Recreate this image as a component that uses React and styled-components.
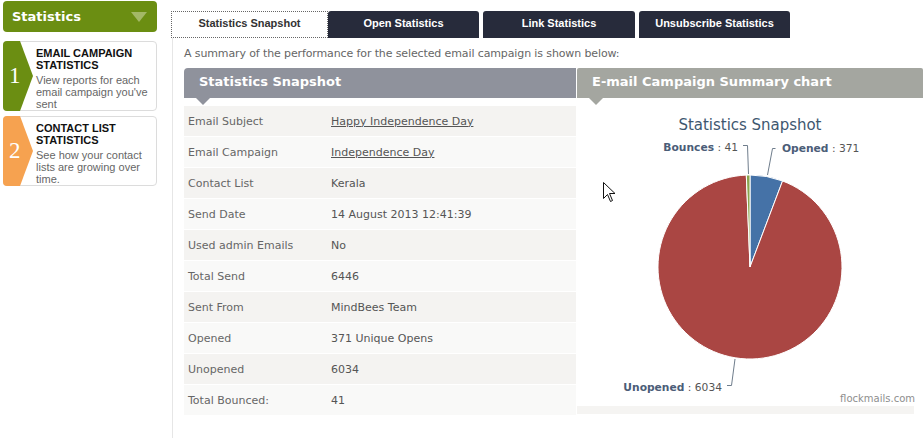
import React from 'react';
import styled, { createGlobalStyle } from 'styled-components';

const GlobalStyle = createGlobalStyle`
  body {
    margin: 0;
    background: #fff;
    overflow: hidden;
  }
`;

const steps = [
  {
    num: '1',
    color: '#6b8e12',
    title: 'Email Campaign Statistics',
    text: "View reports for each email campaign you've sent",
  },
  {
    num: '2',
    color: '#f6a250',
    title: 'Contact List Statistics',
    text: 'See how your contact lists are growing over time.',
  },
];

const tabs = [
  { label: 'Statistics Snapshot', width: 157, active: true, gap: 0 },
  { label: 'Open Statistics', width: 151, gap: 0 },
  { label: 'Link Statistics', width: 152, gap: 4 },
  { label: 'Unsubscribe Statistics', width: 151, gap: 4 },
];

const rows = [
  ['Email Subject', 'Happy Independence Day', true],
  ['Email Campaign', 'Independence Day', true],
  ['Contact List', 'Kerala'],
  ['Send Date', '14 August 2013 12:41:39'],
  ['Used admin Emails', 'No'],
  ['Total Send', '6446'],
  ['Sent From', 'MindBees Team'],
  ['Opened', '371 Unique Opens'],
  ['Unopened', '6034'],
  ['Total Bounced:', '41'],
];

const PieChart = () => (
  <svg width="341" height="307" viewBox="0 0 341 307">
    <text
      x="173"
      y="31"
      textAnchor="middle"
      fontFamily="DejaVu Sans, sans-serif"
      fontSize="15"
      fill="#3e576f"
      textLength="143"
    >
      Statistics Snapshot
    </text>

    <g stroke="#fff" strokeWidth="1" strokeLinejoin="round">
      <path d="M173 168 L173 76 A92 92 0 0 1 205.55 81.95 Z" fill="#4572a7" />
      <path d="M173 168 L205.55 81.95 A92 92 0 1 1 169.32 76.07 Z" fill="#aa4643" />
      <path d="M173 168 L169.32 76.07 A92 92 0 0 1 173 76 Z" fill="#89a54e" />
    </g>

    <g fill="none" stroke="#6f7d8c" strokeWidth="1">
      <path d="M166 46.5 L170.5 46.5 L171.5 75" />
      <path d="M198.5 49.5 L195.5 49.5 L190.5 76" />
      <path d="M158 260 L154.5 286.5 L150 286.5" />
    </g>

    <g fontFamily="DejaVu Sans, sans-serif" fontSize="10.7">
      <text x="161" y="52" textAnchor="end" fill="#555">
        <tspan fontWeight="bold" fill="#4b5d78">Bounces</tspan> : 41
      </text>
      <text x="205" y="53" fill="#555">
        <tspan fontWeight="bold" fill="#4b5d78">Opened</tspan> : 371
      </text>
      <text x="145" y="292" textAnchor="end" fill="#555">
        <tspan fontWeight="bold" fill="#4b5d78">Unopened</tspan> : 6034
      </text>
      <text x="338" y="303" textAnchor="end" fontSize="10" fill="#8e8e8e">
        flockmails.com
      </text>
    </g>

    <path
      d="M26.5 83.5 L26.5 99.5 L30.5 95.5 L33.5 102.5 L35.5 101.5 L32.5 94.5 L38 94.5 Z"
      fill="#fff"
      stroke="#111"
      strokeWidth="1"
      strokeLinejoin="round"
    />
  </svg>
);

const App = () => {
  return (
    <Page>
      <GlobalStyle />
      <Sidebar>
        <SideHeader>
          Statistics
          <Caret />
        </SideHeader>
        <StepList>
          {steps.map((s) => (
            <StepCard key={s.num}>
              <Badge color={s.color}>{s.num}</Badge>
              <StepText>
                <StepTitle>{s.title}</StepTitle>
                <StepDesc>{s.text}</StepDesc>
              </StepText>
            </StepCard>
          ))}
        </StepList>
      </Sidebar>

      <Main>
        <TabBar>
          {tabs.map((t) => (
            <Tab key={t.label} active={t.active} w={t.width} gap={t.gap}>
              {t.label}
            </Tab>
          ))}
        </TabBar>
        <Body>
          <Intro>A summary of the performance for the selected email campaign is shown below:</Intro>
          <Columns>
            <LeftCol>
              <PanelHeader bg="#8f929c" rounded>
                Statistics Snapshot
              </PanelHeader>
              <Table>
                {rows.map(([label, value, link], i) => (
                  <Row key={label} odd={i % 2 === 0}>
                    <Label>{label}</Label>
                    <Value link={link}>{value}</Value>
                  </Row>
                ))}
              </Table>
            </LeftCol>
            <RightCol>
              <PanelHeader bg="#a4a6a0">E-mail Campaign Summary chart</PanelHeader>
              <ChartPanel>
                <ChartCanvas>
                  <PieChart />
                </ChartCanvas>
              </ChartPanel>
            </RightCol>
          </Columns>
        </Body>
      </Main>
    </Page>
  );
};

export default App;

const Page = styled.div`
  display: flex;
  align-items: stretch;
  height: 438px;
  overflow: hidden;
`;

const Sidebar = styled.aside`
  width: 154px;
  margin: 1px 0 0 3px;
  flex-shrink: 0;
  display: flex;
  flex-direction: column;
`;

const SideHeader = styled.div`
  display: flex;
  align-items: center;
  justify-content: space-between;
  height: 31px;
  padding: 0 10px 0 9px;
  border-radius: 4px;
  background: #6b8e12;
  color: #fff;
  font-family: 'DejaVu Sans', sans-serif;
  font-weight: bold;
  font-size: 13px;
`;

const Caret = styled.span`
  width: 0;
  height: 0;
  border-left: 8px solid transparent;
  border-right: 8px solid transparent;
  border-top: 10px solid #a3b866;
`;

const StepList = styled.div`
  display: flex;
  flex-direction: column;
  gap: 5px;
  margin-top: 9px;
`;

const StepCard = styled.div`
  display: flex;
  height: 68px;
  border: 1px solid #dcdcdc;
  border-radius: 4px;
  background: #fff;
`;

const Badge = styled.div`
  width: 30px;
  margin: -1px 0 -1px -1px;
  flex-shrink: 0;
  display: flex;
  align-items: center;
  padding-left: 6px;
  box-sizing: border-box;
  background: ${(p) => p.color};
  border-radius: 4px 0 0 4px;
  clip-path: polygon(0 0, 17px 0, 30px 50%, 17px 100%, 0 100%);
  color: #fff;
  font-family: 'Liberation Serif', serif;
  font-size: 23px;
`;

const StepText = styled.div`
  padding: 5px 4px 0 3px;
  font-family: 'Liberation Sans', Arial, sans-serif;
  font-size: 11px;
  line-height: 12px;
`;

const StepTitle = styled.div`
  font-weight: bold;
  text-transform: uppercase;
  color: #111;
`;

const StepDesc = styled.div`
  margin-top: 3px;
  color: #666;
`;

const Main = styled.main`
  margin-left: 14px;
  display: flex;
  flex-direction: column;
  flex: 1;
`;

const TabBar = styled.div`
  display: flex;
  margin-top: 11px;
  height: 27px;
`;

const Tab = styled.div`
  width: ${(p) => p.w}px;
  margin-left: ${(p) => p.gap}px;
  padding-bottom: 4px;
  box-sizing: border-box;
  display: flex;
  align-items: center;
  justify-content: center;
  border-radius: ${(p) => (p.active ? '0' : '3px 3px 0 0')};
  border: ${(p) => (p.active ? '1px dotted #666' : 'none')};
  background: ${(p) => (p.active ? '#fff' : '#272b3b')};
  color: ${(p) => (p.active ? '#333' : '#fff')};
  font-family: 'Liberation Sans', Arial, sans-serif;
  font-weight: bold;
  font-size: 11px;
`;

const Body = styled.section`
  flex: 1;
  margin-left: 1px;
  padding-left: 11px;
  border-left: 1px solid #e6e6e6;
  font-family: 'DejaVu Sans', Verdana, sans-serif;
`;

const Intro = styled.p`
  margin: 0;
  padding-top: 9px;
  height: 21px;
  line-height: 14px;
  font-size: 11px;
  letter-spacing: -0.12px;
  color: #666;
`;

const Columns = styled.div`
  display: flex;
`;

const LeftCol = styled.div`
  width: 392px;
  flex-shrink: 0;
`;

const RightCol = styled.div`
  width: 346px;
  flex-shrink: 0;
  margin-left: 1px;
`;

const PanelHeader = styled.div`
  position: relative;
  height: 30px;
  line-height: 28px;
  padding-left: 15px;
  border-radius: ${(p) => (p.rounded ? '4px 0 0 0' : '2px 2px 0 0')};
  background: ${(p) => p.bg};
  color: #fff;
  font-weight: bold;
  font-size: 13px;
  &::after {
    content: '';
    position: absolute;
    left: 12px;
    bottom: -7px;
    border-left: 7px solid transparent;
    border-right: 7px solid transparent;
    border-top: 7px solid ${(p) => p.bg};
  }
`;

const Table = styled.div`
  margin-top: 8px;
  display: flex;
  flex-direction: column;
  gap: 1px;
`;

const Row = styled.div`
  display: flex;
  align-items: center;
  height: 30px;
  background: ${(p) => (p.odd ? '#f4f3f1' : '#f9f9f8')};
  font-size: 11px;
  color: #666;
`;

const Label = styled.span`
  width: 143px;
  padding-left: 4px;
`;

const Value = styled.span`
  color: #555;
  text-decoration: ${(p) => (p.link ? 'underline' : 'none')};
`;

const ChartPanel = styled.div`
  width: 341px;
  margin-top: 1px;
  padding-bottom: 8px;
  background: linear-gradient(to right, #f5f4f2 337px, transparent 337px);
`;

const ChartCanvas = styled.div`
  height: 307px;
  background: #fff;
  svg {
    display: block;
  }
`;
